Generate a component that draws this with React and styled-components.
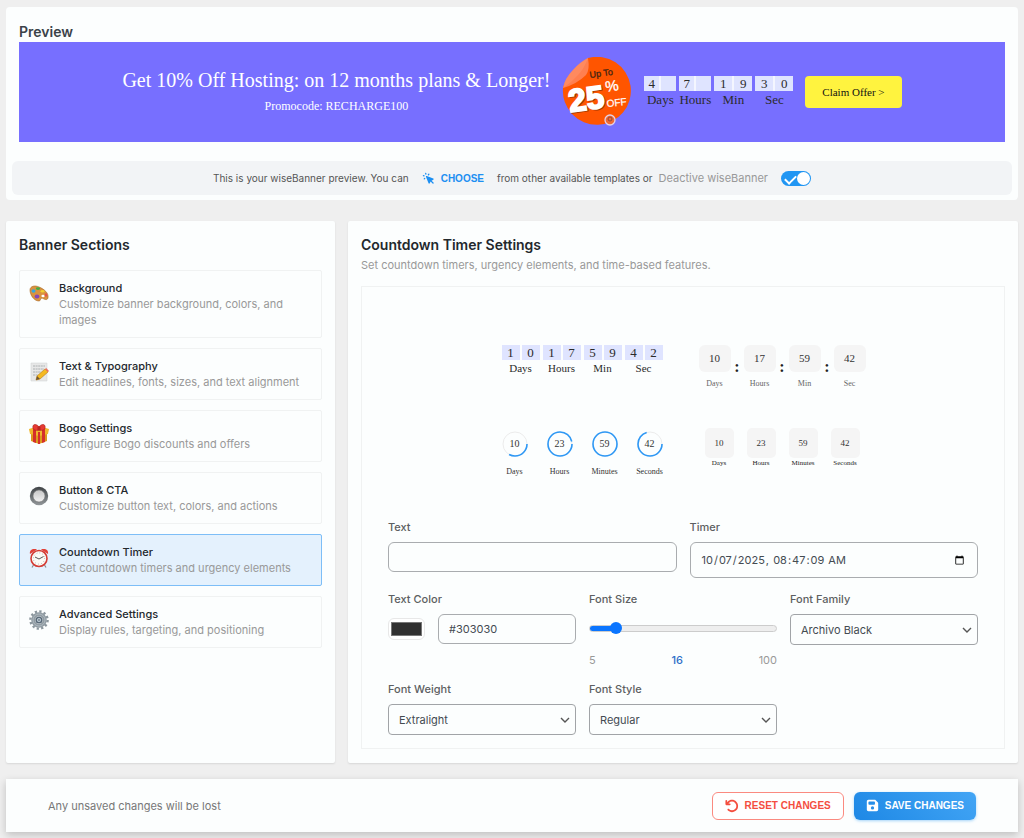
import { useState } from 'react';
import styled, { createGlobalStyle } from 'styled-components';
import { FaArrowRotateLeft, FaFloppyDisk } from 'react-icons/fa6';
import { HiCursorClick } from 'react-icons/hi';

const sections = [
    { id: 'background', icon: <PaletteIcon />, title: 'Background', text: 'Customize banner background, colors, and images' },
    { id: 'text', icon: <MemoIcon />, title: 'Text & Typography', text: 'Edit headlines, fonts, sizes, and text alignment' },
    { id: 'bogo', icon: <GiftIcon />, title: 'Bogo Settings', text: 'Configure Bogo discounts and offers' },
    { id: 'button', icon: <RadioIcon />, title: 'Button & CTA', text: 'Customize button text, colors, and actions' },
    { id: 'countdown', icon: <ClockIcon />, title: 'Countdown Timer', text: 'Set countdown timers and urgency elements' },
    { id: 'advanced', icon: <GearIcon />, title: 'Advanced Settings', text: 'Display rules, targeting, and positioning' },
];

const bannerTime = [['4', '', 'Days'], ['7', '', 'Hours'], ['1', '9', 'Min'], ['3', '0', 'Sec']];
const flipTime = [['1', '0', 'Days'], ['1', '7', 'Hours'], ['5', '9', 'Min'], ['4', '2', 'Sec']];
const boxTime = [['10', 'Days'], ['17', 'Hours'], ['59', 'Min'], ['42', 'Sec']];
const smallTime = [['10', 'Days'], ['23', 'Hours'], ['59', 'Minutes'], ['42', 'Seconds']];
const ringTime = [['10', 'Days', 0.33], ['23', 'Hours', 0.96], ['59', 'Minutes', 1], ['42', 'Seconds', 0.7]];

export default function App() {
    const [active, setActive] = useState('countdown');
    const [enabled, setEnabled] = useState(true);
    const [text, setText] = useState('');
    const [timer, setTimer] = useState('2025-10-07T08:47:09');
    const [color, setColor] = useState('#303030');
    const [size, setSize] = useState(16);

    return (
        <Page>
            <GlobalStyle />
            <PreviewCard>
                <PreviewTitle>Preview</PreviewTitle>
                <Banner>
                    <BannerText>
                        <Headline>Get 10% Off Hosting: on 12 months plans &amp; Longer!</Headline>
                        <Promocode>Promocode: RECHARGE100</Promocode>
                    </BannerText>
                    <Sticker />
                    <FlipTimer time={bannerTime} inBanner />
                    <ClaimButton type="button">Claim Offer &gt;</ClaimButton>
                </Banner>
                <TemplateBar>
                    <BarText>This is your wiseBanner preview. You can</BarText>
                    <ChooseButton type="button"><HiCursorClick size={13} />CHOOSE</ChooseButton>
                    <BarText>from other available templates or</BarText>
                    <ToggleLabel htmlFor="enabled">Deactive wiseBanner</ToggleLabel>
                    <Toggle id="enabled" type="checkbox" checked={enabled} onChange={(e) => setEnabled(e.target.checked)} />
                </TemplateBar>
            </PreviewCard>

            <Columns>
                <Panel>
                    <Title>Banner Sections</Title>
                    <SectionList>
                        {sections.map((section) => (
                            <Section
                                key={section.id}
                                type="button"
                                $active={section.id === active}
                                onClick={() => setActive(section.id)}
                            >
                                <SectionIcon>{section.icon}</SectionIcon>
                                <SectionBody>
                                    <SectionTitle>{section.title}</SectionTitle>
                                    <SectionText>{section.text}</SectionText>
                                </SectionBody>
                            </Section>
                        ))}
                    </SectionList>
                </Panel>

                <Panel>
                    <Title>Countdown Timer Settings</Title>
                    <Subtitle>Set countdown timers, urgency elements, and time-based features.</Subtitle>
                    <Settings>
                        <Templates>
                            <FlipTimer time={flipTime} />
                            <BoxTimer>
                                {boxTime.map(([value, label], i) => (
                                    <BoxPart key={label}>
                                        {i > 0 && <Colon>:</Colon>}
                                        <Unit $gap={6}>
                                            <Box>{value}</Box>
                                            <UnitLabel $size={8} $color="#666">{label}</UnitLabel>
                                        </Unit>
                                    </BoxPart>
                                ))}
                            </BoxTimer>
                            <RingTimer>
                                {ringTime.map(([value, label, part]) => (
                                    <RingUnit key={label}>
                                        <Ring value={value} part={part} />
                                        <UnitLabel $size={8} $color="#333">{label}</UnitLabel>
                                    </RingUnit>
                                ))}
                            </RingTimer>
                            <SmallTimer>
                                {smallTime.map(([value, label]) => (
                                    <Unit key={label} $gap={0}>
                                        <SmallBox>{value}</SmallBox>
                                        <UnitLabel $size={7} $color="#222">{label}</UnitLabel>
                                    </Unit>
                                ))}
                            </SmallTimer>
                        </Templates>

                        <Form>
                            <Field $span={3}>
                                <Label htmlFor="text">Text</Label>
                                <Input id="text" type="text" value={text} onChange={(e) => setText(e.target.value)} />
                            </Field>
                            <Field $span={3}>
                                <Label htmlFor="timer">Timer</Label>
                                <DateInput id="timer" type="datetime-local" step="1" value={timer} onChange={(e) => setTimer(e.target.value)} />
                            </Field>
                            <Field $span={2}>
                                <Label htmlFor="color">Text Color</Label>
                                <ColorRow>
                                    <Swatch type="color" aria-label="Pick text color" value={color} onChange={(e) => setColor(e.target.value)} />
                                    <Input id="color" type="text" value={color} onChange={(e) => setColor(e.target.value)} />
                                </ColorRow>
                            </Field>
                            <Field $span={2}>
                                <Label htmlFor="size">Font Size</Label>
                                <Slider
                                    id="size"
                                    type="range"
                                    min="5"
                                    max="100"
                                    value={size}
                                    onChange={(e) => setSize(Number(e.target.value))}
                                    style={{ '--fill': `${((size - 5) / 95) * 100}%` }}
                                />
                                <Scale>
                                    <span>5</span>
                                    <ScaleValue>{size}</ScaleValue>
                                    <span>100</span>
                                </Scale>
                            </Field>
                            <SelectField id="family" label="Font Family" options={['Archivo Black', 'Inter', 'Roboto']} />
                            <SelectField id="weight" label="Font Weight" options={['Extralight', 'Regular', 'Bold']} />
                            <SelectField id="style" label="Font Style" options={['Regular', 'Italic']} />
                        </Form>
                    </Settings>
                </Panel>
            </Columns>

            <Footer>
                <FooterText>Any unsaved changes will be lost</FooterText>
                <FooterButtons>
                    <ResetButton type="button"><FaArrowRotateLeft size={14} />RESET CHANGES</ResetButton>
                    <SaveButton type="button"><FaFloppyDisk size={13} />SAVE CHANGES</SaveButton>
                </FooterButtons>
            </Footer>
        </Page>
    );
}

function FlipTimer({ time, inBanner }) {
    return (
        <FlipRow>
            {time.map(([tens, ones, label]) => (
                <Unit key={label} $gap={inBanner ? 0 : 1}>
                    <Digits $line={inBanner}>
                        <Digit $narrow={!ones}>{tens}</Digit>
                        <Digit $narrow={!ones}>{ones}</Digit>
                    </Digits>
                    <UnitLabel $size={inBanner ? 13 : 11} $color="#2b2b2b">{label}</UnitLabel>
                </Unit>
            ))}
        </FlipRow>
    );
}

function SelectField({ id, label, options }) {
    return (
        <Field $span={2}>
            <Label htmlFor={id}>{label}</Label>
            <SelectWrap>
                <Select id={id} defaultValue={options[0]}>
                    {options.map((option) => <option key={option}>{option}</option>)}
                </Select>
                <Chevron viewBox="0 0 10 6"><path d="M1 1l4 4 4-4" /></Chevron>
            </SelectWrap>
        </Field>
    );
}

function Ring({ value, part }) {
    const length = 2 * Math.PI * 12;

    return (
        <RingBox>
            <svg width="26" height="26" viewBox="0 0 26 26" fill="none">
                <circle cx="13" cy="13" r="12" stroke="#ececec" />
                <circle cx="13" cy="13" r="12" stroke="#2e98f5" strokeWidth="1.6" strokeDasharray={`${length * part} ${length}`} />
            </svg>
            <RingValue>{value}</RingValue>
        </RingBox>
    );
}

function Sticker() {
    return (
        <StickerSvg viewBox="0 2 70 70">
            <path d="M26 3A34 34 0 1 1 1 33Q3 24 26 3z" fill="#ff5500" />
            <path d="M26 3Q28 15 24 20Q15 29 1 33Q3 23 11 15Q18 7 26 3z" fill="#ff7f50" />
            <path d="M26 3Q22 14 16 20Q10 27 1 33Q3 23 11 15Q18 7 26 3z" fill="#ff9870" opacity=".45" />
            <g fontFamily="'Liberation Sans', Arial, sans-serif">
                <text x="28" y="23" fontSize="9" fill="#3f2413" stroke="#3f2413" strokeWidth=".3" transform="rotate(-8 28 23)">Up To</text>
                <g transform="rotate(-8 9 57)" fontWeight="700" fontSize="32">
                    <text x="9" y="58" fill="#9e3300" stroke="#9e3300" strokeWidth="1.6">25</text>
                    <text x="8" y="57" fill="#fff" stroke="#fff" strokeWidth="1.8">25</text>
                </g>
                <text x="44" y="37" fontSize="15" fill="#fff" stroke="#fff" strokeWidth=".3" transform="rotate(-8 44 37)">%</text>
                <text x="45" y="52" fontSize="10" fill="#fff" stroke="#fff" strokeWidth=".2" transform="rotate(-6 45 52)">OFF</text>
            </g>
            <circle cx="48" cy="65" r="5" fill="#f06a35" stroke="#e3d2e8" strokeWidth="1.3" />
            <circle cx="48" cy="64" r="2" fill="none" stroke="#8d4a3b" />
        </StickerSvg>
    );
}

function PaletteIcon() {
    return (
        <svg viewBox="0 0 20 20">
            <path d="M1 6C1 2 6 1 10 3c5 2 10 6 9 11-1 3-4 1-6 0-2 0-1 3-3 3C5 17 1 11 1 6z" fill="#d9933f" stroke="#a8641f" strokeWidth=".6" />
            <ellipse cx="14" cy="12" rx="1.6" ry="1.2" fill="#fff" />
            <ellipse cx="4.5" cy="7" rx="2" ry="1.7" fill="#35a8dc" />
            <ellipse cx="9" cy="4.6" rx="2.2" ry="1.4" fill="#43ad45" />
            <ellipse cx="13.5" cy="7.2" rx="1.9" ry="1.3" fill="#f1cf30" />
            <ellipse cx="17" cy="11" rx="1.3" ry="1.8" fill="#e4544a" />
            <ellipse cx="8" cy="12.5" rx="2.4" ry="2" fill="#8648b5" />
        </svg>
    );
}

function MemoIcon() {
    return (
        <svg viewBox="0 0 20 20">
            <path d="M2 1h16v18H2z" fill="#e7e8e8" stroke="#cfd0d0" strokeWidth=".5" />
            <path d="M4 4h12M4 7h11M4 10h8M4 13h5" stroke="#9fa3a5" strokeWidth=".8" strokeDasharray="2 .6" />
            <path d="M8 14l8-7 3 3-8 7-4 1z" fill="#f5b921" stroke="#b57b16" strokeWidth=".6" />
            <path d="M16 7l1.2-1 2.8 3-1 1z" fill="#ef6c60" />
            <path d="M7 18l1-4 3 3z" fill="#6d5534" />
        </svg>
    );
}

function GiftIcon() {
    return (
        <svg viewBox="0 0 20 20">
            <path d="M2 8l8 2 8-2v9l-8 3-8-3z" fill="#dc9a1e" />
            <path d="M0 5l10-3 10 3-1 5-9 2-9-2z" fill="#efb72c" />
            <path d="M4 4l3-1v16l-3-1zM13 3l3 1v14l-3 1zM9 8h2v12H9z" fill="#d5302a" />
            <path d="M10 6C7 7 3 6 4 2c1-3 5-1 6 1 1-2 5-4 6-1 1 4-3 5-6 4z" fill="#e63b32" stroke="#a81f1c" strokeWidth=".6" />
            <path d="M8.500 2.500h3v4h-3z" fill="#b92521" />
        </svg>
    );
}

function RadioIcon() {
    return (
        <svg viewBox="0 0 20 20">
            <defs>
                <linearGradient id="rim" x2="0" y2="1"><stop stopColor="#3f4346" /><stop offset="1" stopColor="#92979a" /></linearGradient>
                <linearGradient id="knob" x2="0" y2="1"><stop stopColor="#c6c6c6" /><stop offset="1" stopColor="#f2f2f2" /></linearGradient>
            </defs>
            <circle cx="10" cy="10" r="9.200" fill="url(#rim)" />
            <circle cx="10" cy="10" r="6" fill="url(#knob)" stroke="#777" strokeWidth=".6" />
        </svg>
    );
}

function ClockIcon() {
    return (
        <svg viewBox="0 0 20 20">
            <path d="M4.500 17L3 19.500M15.500 17l1.500 2.500" stroke="#8c8c8c" strokeWidth="1.200" />
            <path d="M1 6C0 2 4 0 8 1.500zM19 6c1-4-3-6-7-4.500z" fill="#e14138" />
            <circle cx="10" cy="10.500" r="8" fill="#fbfaf5" stroke="#d43b33" strokeWidth="1.600" />
            <circle cx="10" cy="10.500" r="5.600" fill="none" stroke="#777" strokeWidth=".9" strokeDasharray=".5 2.430" />
            <path d="M6 9l4 2 4.500-2.500" stroke="#444" strokeWidth=".9" fill="none" />
        </svg>
    );
}

function GearIcon() {
    return (
        <svg viewBox="0 0 20 20" fill="none">
            <circle cx="10" cy="10" r="8.600" stroke="#8b969d" strokeWidth="2.400" strokeDasharray="2.250 2.253" />
            <circle cx="10" cy="10" r="5.800" stroke="#919ca3" strokeWidth="4" />
            <circle cx="10" cy="10" r="6" stroke="#b4bec4" strokeWidth=".8" />
            <circle cx="10" cy="10" r="3.600" fill="#596a78" />
            <circle cx="10" cy="10" r="2" fill="#c3d0da" />
            <circle cx="10" cy="10" r=".8" fill="#3c4a56" />
        </svg>
    );
}

const GlobalStyle = createGlobalStyle`
    * {
        box-sizing: border-box;
    }

    body {
        margin: 0;
        background-color: #efefef;
        font-family: 'Inter', sans-serif;
    }

    h1, h2, p {
        margin: 0;
    }

    button, input, select {
        font-family: inherit;
    }
`

const serif = "'Liberation Serif', 'Times New Roman', serif";
const helvetica = "'Liberation Sans', Arial, sans-serif";

const Page = styled.div`
    padding: 7px 6px 6px;
`

const PreviewCard = styled.section`
    background-color: #fcfefe;
    border-radius: 4px;
    padding: 14px 6px 5px;
`

const PreviewTitle = styled.h1`
    font-size: 14px;
    line-height: 21px;
    font-weight: 600;
    color: #3b4248;
    padding-left: 7px;
`

const Banner = styled.div`
    background-color: #776fff;
    min-height: 100px;
    margin: 0 7px;
    display: flex;
    align-items: center;
    justify-content: center;
    gap: 12px;
    font-family: ${serif};
`

const BannerText = styled.div`
    display: flex;
    flex-direction: column;
    align-items: center;
    gap: 4px;
    color: white;
`

const Headline = styled.p`
    font-size: 20px;
    line-height: 24px;
`

const Promocode = styled.p`
    font-size: 12px;
    line-height: 20px;
`

const StickerSvg = styled.svg`
    width: 70px;
    height: 70px;
`

const ClaimButton = styled.button`
    background-color: #fff33f;
    border: none;
    border-radius: 4px;
    padding: 8px 17px;
    font-family: ${serif};
    font-size: 11px;
    line-height: 16px;
    color: #111;
`

const TemplateBar = styled.div`
    background-color: #f2f4f6;
    border-radius: 6px;
    margin-top: 19px;
    min-height: 34px;
    display: flex;
    align-items: center;
    justify-content: center;
`

const BarText = styled.p`
    font-size: 10px;
    line-height: 16px;
    color: #555;
`

const ChooseButton = styled.button`
    border: none;
    background: none;
    padding: 0 13px;
    display: flex;
    align-items: center;
    gap: 6px;
    color: #1c8ff2;
    font-family: ${helvetica};
    font-size: 10px;
    font-weight: 700;
`

const ToggleLabel = styled.label`
    font-size: 11px;
    line-height: 16px;
    color: #999;
    margin: 0 13px 0 6px;
`

const Toggle = styled.input`
    appearance: none;
    margin: 0;
    width: 30px;
    height: 15px;
    border-radius: 8px;
    background-color: #bbb;
    position: relative;

    &::after {
        content: '';
        position: absolute;
        top: 1px;
        left: 1px;
        width: 13px;
        height: 13px;
        border-radius: 50%;
        background-color: white;
    }

    &:checked {
        background-color: #2196f3;
    }

    &:checked::after {
        left: 16px;
    }

    &:checked::before {
        content: '';
        position: absolute;
        top: 2px;
        left: 6px;
        width: 5px;
        height: 9px;
        border: solid white;
        border-width: 0 2px 2px 0;
        transform: rotate(45deg);
    }
`

const Columns = styled.div`
    display: grid;
    grid-template-columns: 329fr 670fr;
    gap: 13px;
    margin-top: 21px;
`

const Panel = styled.section`
    background-color: #fcfefe;
    border-radius: 2px;
    box-shadow: 0 1px 2px rgba(0, 0, 0, 0.1);
    padding: 14px 13px;
`

const Title = styled.h2`
    font-size: 14px;
    line-height: 20px;
    font-weight: 600;
    color: #23282d;
`

const SectionList = styled.div`
    display: flex;
    flex-direction: column;
    gap: 10px;
    margin-top: 15px;
`

const Section = styled.button`
    width: 100%;
    display: flex;
    align-items: flex-start;
    gap: 10px;
    padding: 9px;
    text-align: left;
    border-radius: 2px;
    border: 1px solid ${(props) => props.$active ? '#7dbef7' : '#f0f2f2'};
    background-color: ${(props) => props.$active ? '#e4f1fd' : 'transparent'};
`

const SectionIcon = styled.span`
    flex: none;
    width: 20px;
    height: 20px;
    margin-top: 4px;

    svg {
        display: block;
        width: 20px;
        height: 20px;
    }
`

const SectionBody = styled.span`
    display: flex;
    flex-direction: column;
`

const SectionTitle = styled.span`
    font-size: 11px;
    line-height: 16px;
    font-weight: 500;
    color: #23282d;
`

const SectionText = styled.span`
    font-size: 11px;
    line-height: 16px;
    color: #999;
`

const Subtitle = styled.p`
    font-size: 11px;
    line-height: 20px;
    color: #999;
`

const Settings = styled.div`
    border: 1px solid #f0f2f2;
    margin-top: 11px;
    padding: 58px 26px 13px;
`

const Templates = styled.div`
    display: grid;
    grid-template-columns: 162px 166px;
    column-gap: 36px;
    row-gap: 40px;
    justify-content: center;
    justify-items: center;
    font-family: ${serif};
`

const FlipRow = styled.div`
    display: flex;
    align-items: flex-start;
    gap: 3px;
    font-family: ${serif};
`

const Unit = styled.div`
    display: flex;
    flex-direction: column;
    align-items: center;
    gap: ${(props) => props.$gap}px;
`

const Digits = styled.div`
    display: flex;
    gap: 2px;
    background-color: ${(props) => props.$line ? '#f4f6ff' : 'transparent'};
`

const Digit = styled.span`
    width: ${(props) => props.$narrow ? 15 : 18}px;
    height: 15px;
    background-color: #dfe4ff;
    font-size: 13px;
    line-height: 15px;
    text-align: center;
    color: #2b2b2b;
`

const UnitLabel = styled.span`
    font-size: ${(props) => props.$size}px;
    line-height: ${(props) => props.$size + 4}px;
    color: ${(props) => props.$color};
`

const BoxTimer = styled.div`
    display: flex;
`

const BoxPart = styled.div`
    display: flex;
    align-items: flex-start;
`

const Colon = styled.span`
    width: 13px;
    padding-top: 12px;
    font-size: 16px;
    line-height: 20px;
    font-weight: 700;
    text-align: center;
    color: #222;
`

const Box = styled.span`
    width: 32px;
    height: 27px;
    border-radius: 6px;
    background-color: #f5f5f5;
    font-size: 11px;
    line-height: 27px;
    text-align: center;
    color: #333;
`

const SmallTimer = styled.div`
    display: flex;
    gap: 13px;
    margin-top: -2px;
`

const SmallBox = styled.span`
    width: 29px;
    height: 30px;
    border-radius: 5px;
    background-color: #f5f5f5;
    font-size: 9px;
    line-height: 30px;
    text-align: center;
    color: #333;
`

const RingTimer = styled.div`
    display: flex;
    gap: 19px;
    padding-top: 1px;
`

const RingUnit = styled.div`
    width: 26px;
    display: flex;
    flex-direction: column;
    align-items: center;
    gap: 9px;
`

const RingBox = styled.div`
    display: grid;
    place-items: center;

    > * {
        grid-area: 1 / 1;
    }
`

const RingValue = styled.span`
    font-size: 10px;
    line-height: 12px;
    color: #333;
`

const Form = styled.div`
    display: grid;
    grid-template-columns: repeat(6, 1fr);
    column-gap: 13px;
    row-gap: 13px;
    margin-top: 41px;
`

const Field = styled.div`
    grid-column: span ${(props) => props.$span};
    min-width: 0;
`

const Label = styled.label`
    display: block;
    font-size: 11px;
    line-height: 16px;
    font-weight: 500;
    color: #5c5f62;
    margin-bottom: 7px;
`

const Input = styled.input`
    display: block;
    width: 100%;
    min-width: 0;
    height: 30px;
    padding: 0 10px;
    border: 1px solid #a9acaf;
    border-radius: 6px;
    background-color: transparent;
    font-size: 11px;
    color: #444b52;
`

const DateInput = styled(Input)`
    height: 36px;
`

const ColorRow = styled.div`
    display: flex;
    align-items: center;
    gap: 13px;
`

const Swatch = styled.input`
    appearance: none;
    flex: none;
    width: 37px;
    height: 22px;
    padding: 3px 2px;
    border: 1px solid #e8e8e8;
    border-radius: 6px;
    background-color: #fff;

    &::-webkit-color-swatch-wrapper {
        padding: 0;
    }

    &::-webkit-color-swatch {
        border: 1px solid #777;
    }
`

const Slider = styled.input`
    appearance: none;
    display: block;
    width: 100%;
    height: 12px;
    margin: 15px 0 18px;
    background: transparent;

    &::-webkit-slider-runnable-track {
        height: 7px;
        border-radius: 4px;
        border: 1px solid #ccc;
        background: linear-gradient(to right, #0a75ff var(--fill), #eee var(--fill)) border-box;
    }

    &::-webkit-slider-thumb {
        appearance: none;
        width: 12px;
        height: 12px;
        margin-top: -4px;
        border-radius: 50%;
        background-color: #0a75ff;
    }
`

const Scale = styled.div`
    display: flex;
    justify-content: space-between;
    font-size: 11px;
    line-height: 16px;
    color: #999;
`

const ScaleValue = styled.span`
    font-weight: 500;
    color: #2f6fc9;
`

const SelectWrap = styled.div`
    display: grid;
    align-items: center;

    > * {
        grid-area: 1 / 1;
    }
`

const Select = styled.select`
    appearance: none;
    width: 100%;
    height: 31px;
    padding: 0 10px;
    border: 1px solid #a1a4a7;
    border-radius: 4px;
    background-color: transparent;
    font-size: 11px;
    color: #444b52;
`

const Chevron = styled.svg`
    width: 10px;
    height: 6px;
    justify-self: end;
    margin-right: 6px;
    fill: none;
    stroke: #555;
    stroke-width: 1.4;
    pointer-events: none;
`

const Footer = styled.footer`
    margin-top: 16px;
    min-height: 53px;
    padding: 0 42px;
    background-color: #fcfefe;
    box-shadow: 0 3px 8px rgba(0, 0, 0, 0.2);
    display: flex;
    align-items: center;
    justify-content: space-between;
`

const FooterText = styled.p`
    font-size: 11px;
    color: #777;
`

const FooterButtons = styled.div`
    display: flex;
    gap: 10px;
`

const FooterButton = styled.button`
    height: 28px;
    padding: 0 12px;
    border-radius: 6px;
    display: flex;
    align-items: center;
    gap: 6px;
    font-family: ${helvetica};
    font-size: 10px;
    font-weight: 700;
`

const ResetButton = styled(FooterButton)`
    border: 1px solid #fb8a80;
    background-color: white;
    color: #f44e3f;
`

const SaveButton = styled(FooterButton)`
    border: none;
    background: linear-gradient(45deg, #1e88e5, #42a5f5);
    box-shadow: 0 1px 3px rgba(33, 150, 243, 0.4);
    color: white;
`
